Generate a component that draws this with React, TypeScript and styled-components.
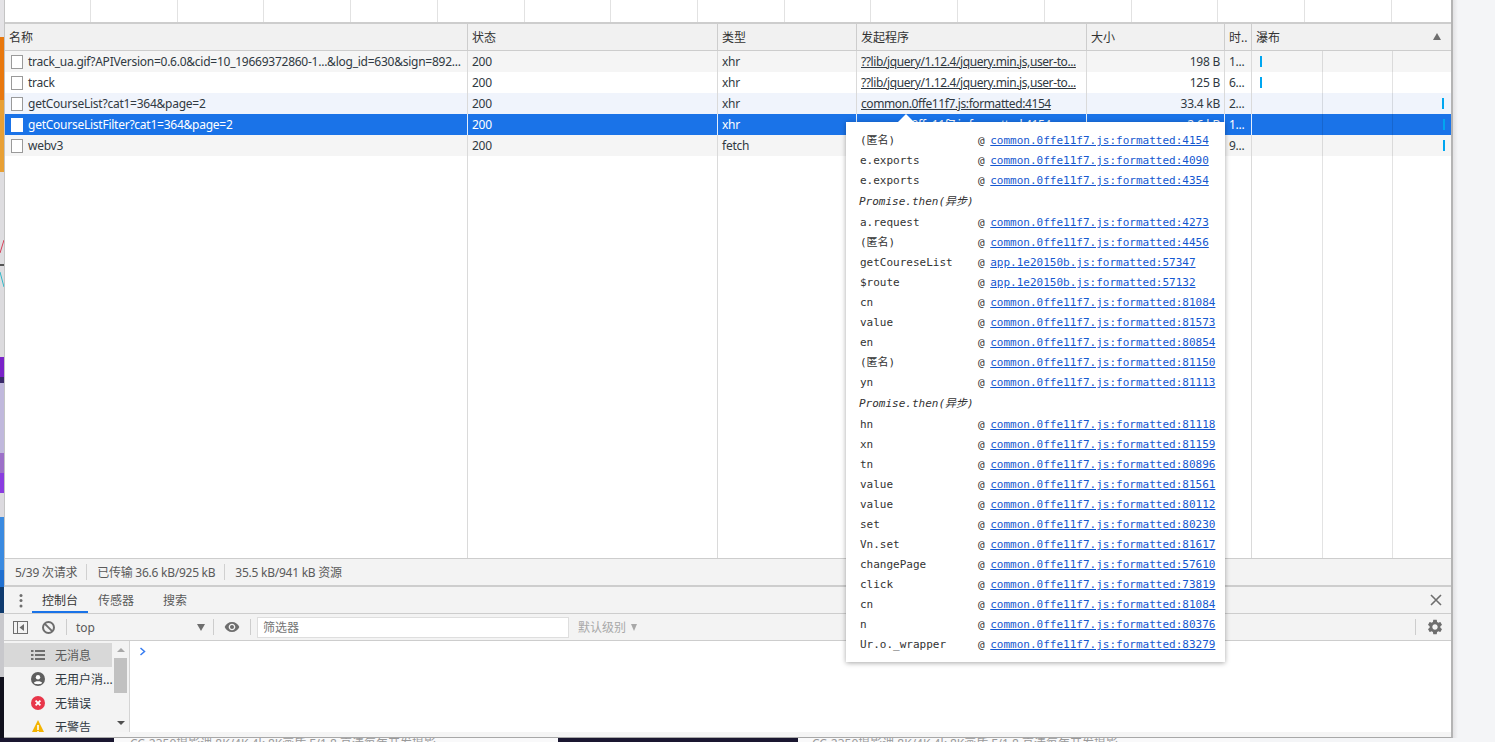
import React from "react";
import styled, { createGlobalStyle } from "styled-components";

const Global = createGlobalStyle`
  html, body { margin: 0; padding: 0; background: #f4f5f7; }
  * { box-sizing: border-box; }
`;

const UI = `"Noto Sans", "Noto Sans CJK SC", sans-serif`;
const MONO = `"DejaVu Sans Mono", "Noto Sans CJK SC", monospace`;
const COLS = "463px 250px 139px 230px 138px 27px 199px";

const Page = styled.div`
  width: 1495px;
  height: 742px;
  overflow: hidden;
  display: flex;
  flex-direction: column;
  font-family: ${UI};
  font-size: 12px;
  color: #303942;
`;
const Main = styled.div`
  display: flex;
  height: 738px;
`;
const Strip = styled.div`
  width: 4px;
  display: flex;
  flex-direction: column;
  flex: none;
`;
const StripPart = styled.div<{ $h: number; $c: string }>`
  height: ${(p) => p.$h}px;
  background: ${(p) => p.$c};
  flex: none;
`;
const StripChart = styled.svg`
  display: block;
  width: 4px;
  height: 50px;
  background: #dedde0;
  flex: none;
`;
const DevTools = styled.div`
  width: 1449px;
  flex: none;
  position: relative;
  display: flex;
  flex-direction: column;
  background: #fff;
  border-right: 2px solid #b4b4b4;
  border-bottom: 1px solid #a8a8a8;
`;
const Gutter = styled.div`
  flex: 1;
  background: linear-gradient(to right, #e2e2e4, #f4f5f7 5px);
`;
const Network = styled.div`
  height: 587px;
  flex: none;
  display: flex;
  flex-direction: column;
  border-left: 1px solid #c4c4c4;
`;
const Ruler = styled.div`
  height: 24px;
  flex: none;
  display: flex;
  border-bottom: 2px solid #cdcdcd;
  overflow: hidden;
`;
const Tick = styled.div`
  width: 86.73px;
  flex: none;
  border-right: 1px solid #e2e2e2;
  &:first-child { width: 86px; }
`;
const Head = styled.div`
  height: 27px;
  flex: none;
  display: grid;
  grid-template-columns: ${COLS};
  background: #f1f1f1;
  border-bottom: 1px solid #cdcdcd;
`;
const HeadCell = styled.div`
  border-right: 1px solid #cdcdcd;
  padding-left: 4px;
  line-height: 28px;
  height: 26px;
  color: #333;
  position: relative;
  &:last-child { border-right: 0; }
`;
const SortArrow = styled.span`
  position: absolute;
  right: 10px;
  top: 9px;
  width: 0;
  height: 0;
  border-left: 4px solid transparent;
  border-right: 4px solid transparent;
  border-bottom: 7px solid #6e6e6e;
`;
const Body = styled.div`
  flex: 1;
  display: flex;
  flex-direction: column;
  min-height: 0;
`;
const Row = styled.div<{ $kind: string }>`
  height: 21px;
  flex: none;
  display: grid;
  grid-template-columns: ${COLS};
  line-height: 22px;
  letter-spacing: -0.25px;
  white-space: nowrap;
  background: ${(p) =>
    p.$kind === "sel" ? "#1a73e8" : p.$kind === "hover" ? "#f0f4fc" : p.$kind === "odd" ? "#f5f5f5" : "#fff"};
  color: ${(p) => (p.$kind === "sel" ? "#fff" : "#303942")};
  --line: ${(p) => (p.$kind === "sel" ? "#e4eefc" : "#dadada")};
`;
const Filler = styled.div`
  flex: 1;
  display: grid;
  grid-template-columns: ${COLS};
  --line: #dadada;
`;
const Cell = styled.div<{ $right?: boolean }>`
  border-right: 1px solid var(--line);
  padding: 0 4px;
  overflow: hidden;
  text-align: ${(p) => (p.$right ? "right" : "left")};
`;
const NameCell = styled(Cell)`
  display: flex;
  align-items: center;
  padding-left: 6px;
  gap: 5px;
`;
const FileIcon = styled.span<{ $sel: boolean }>`
  width: 12px;
  height: 14px;
  flex: none;
  border: 1px solid ${(p) => (p.$sel ? "#fff" : "#9a9a9a")};
  background: #fff;
`;
const InitLink = styled.span`
  text-decoration: underline;
  letter-spacing: -0.4px;
`;
const Fall = styled.div`
  position: relative;
  display: grid;
  grid-template-columns: 71px 70px 1fr;
`;
const FallCol = styled.div`
  border-right: 1px solid rgba(0, 0, 0, 0.11);
  &:last-of-type { border-right: 0; }
`;
const Bar = styled.span<{ $x: number }>`
  position: absolute;
  left: ${(p) => p.$x}px;
  top: 5px;
  width: 2px;
  height: 11px;
  background: #00a6f0;
`;
const StatusBar = styled.div`
  height: 29px;
  flex: none;
  display: flex;
  align-items: center;
  padding-left: 10px;
  background: #f3f3f3;
  color: #5a5a5a;
  letter-spacing: -0.25px;
  border-top: 1px solid #cdcdcd;
  border-bottom: 2px solid #cdcdcd;
`;
const StatusItem = styled.div`
  padding-right: 9px;
  margin-right: 10px;
  height: 16px;
  line-height: 18px;
  border-right: 1px solid #d0d0d0;
  &:last-child { border-right: 0; }
`;
const Tabs = styled.div`
  height: 27px;
  flex: none;
  display: flex;
  background: #f3f3f3;
  border-bottom: 1px solid #cdcdcd;
`;
const Kebab = styled.svg`
  display: block;
  width: 28px;
  height: 26px;
  flex: none;
`;
const Tab = styled.div<{ $active?: boolean; $gap?: number }>`
  padding: 0 10px;
  margin-left: ${(p) => p.$gap ?? 0}px;
  line-height: 27px;
  height: 26px;
  color: ${(p) => (p.$active ? "#333" : "#5a5a5a")};
  border-bottom: 2px solid ${(p) => (p.$active ? "#1a73e8" : "transparent")};
`;
const CloseBtn = styled.svg`
  display: block;
  width: 12px;
  height: 12px;
  margin: 7px 9px 0 auto;
`;
const Toolbar = styled.div`
  height: 27px;
  flex: none;
  display: flex;
  align-items: center;
  padding: 0 7px 0 9px;
  background: #f3f3f3;
  border-bottom: 1px solid #cdcdcd;
`;
const ToolIcon = styled.svg<{ $w: number; $ml: number; $h?: number }>`
  display: block;
  width: ${(p) => p.$w}px;
  height: ${(p) => p.$h ?? p.$w}px;
  margin-left: ${(p) => p.$ml}px;
  flex: none;
`;
const Divider = styled.span<{ $ml: number; $auto?: boolean }>`
  width: 1px;
  height: 16px;
  flex: none;
  background: #cdcdcd;
  margin-left: ${(p) => (p.$auto ? "auto" : `${p.$ml}px`)};
`;
const Context = styled.div`
  width: 129px;
  margin-left: 9px;
  flex: none;
  display: flex;
  align-items: center;
  justify-content: space-between;
  color: #5a5a5a;
`;
const DownArrow = styled.span<{ $w: number; $h: number; $c: string }>`
  width: 0;
  height: 0;
  flex: none;
  border-left: ${(p) => p.$w}px solid transparent;
  border-right: ${(p) => p.$w}px solid transparent;
  border-top: ${(p) => p.$h}px solid ${(p) => p.$c};
`;
const FilterBox = styled.div`
  width: 312px;
  height: 21px;
  margin-left: 6px;
  flex: none;
  padding-left: 5px;
  line-height: 19px;
  background: #fff;
  border: 1px solid #dedede;
  color: #757575;
`;
const Level = styled.div`
  margin-left: 9px;
  display: flex;
  align-items: center;
  gap: 5px;
  color: #a8a8a8;
`;
const Console = styled.div`
  height: 91px;
  flex: none;
  display: flex;
  overflow: hidden;
`;
const Side = styled.div`
  width: 126px;
  flex: none;
  display: flex;
  background: #f3f3f3;
  border-right: 1px solid #d4d4d4;
`;
const SideList = styled.div`
  width: 108px;
  flex: none;
  padding-top: 2px;
`;
const SideItem = styled.div<{ $active?: boolean }>`
  height: 24px;
  flex: none;
  display: flex;
  align-items: center;
  gap: 10px;
  padding-left: 27px;
  white-space: nowrap;
  background: ${(p) => (p.$active ? "#d8d8d8" : "transparent")};
  color: ${(p) => (p.$active ? "#5a5a5a" : "#303942")};
`;
const ItemIcon = styled.svg`
  display: block;
  width: 14px;
  height: 14px;
  flex: none;
`;
const Scroll = styled.div`
  width: 17px;
  flex: none;
  display: flex;
  flex-direction: column;
  align-items: center;
  padding: 7px 0;
`;
const UpArrow = styled.span`
  width: 0;
  height: 0;
  flex: none;
  border-left: 4px solid transparent;
  border-right: 4px solid transparent;
  border-bottom: 4px solid #a8a8a8;
`;
const Thumb = styled.div`
  width: 13px;
  height: 35px;
  margin: 6px 0 auto;
  background: #c1c1c1;
  flex: none;
`;
const Prompt = styled.svg`
  display: block;
  width: 7px;
  height: 9px;
  margin: 6px 0 0 9px;
  flex: none;
`;
const Foot = styled.div`
  flex: 1;
  background: #f5f5f5;
`;
const Popover = styled.div`
  position: absolute;
  left: 842px;
  top: 122px;
  width: 379px;
  padding: 9px 0 7px 14px;
  background: #fff;
  box-shadow: 0 1px 5px rgba(0, 0, 0, 0.35);
  font-family: ${MONO};
  font-size: 11px;
  color: #333;
  white-space: nowrap;
`;
const Tip = styled.span`
  position: absolute;
  left: 52px;
  top: -8px;
  width: 0;
  height: 0;
  border-left: 8px solid transparent;
  border-right: 8px solid transparent;
  border-bottom: 8px solid #fff;
`;
const Frame = styled.div`
  height: 20px;
  line-height: 20px;
  display: grid;
  grid-template-columns: 118px 1fr;
`;
const AsyncFrame = styled.div`
  height: 22px;
  line-height: 22px;
  font-style: italic;
  margin-left: -1px;
`;
const FrameLink = styled.span`
  margin-left: -1px;
  color: #1558d0;
  text-decoration: underline;
`;
const Bottom = styled.div`
  height: 4px;
  flex: none;
  display: flex;
  overflow: hidden;
`;
const BottomDark = styled.div<{ $w: number }>`
  width: ${(p) => p.$w}px;
  flex: none;
  background: #1a1730;
`;
const BottomLight = styled.div<{ $w: number; $pad: number }>`
  width: ${(p) => p.$w}px;
  flex: none;
  padding-left: ${(p) => p.$pad}px;
  background: #f9f9fa;
  color: #9a9a9a;
  line-height: 12px;
  white-space: nowrap;
  overflow: hidden;
`;

const LINK = "??lib/jquery/1.12.4/jquery.min.js,user-to...";
const rows = [
  { kind: "odd", name: "track_ua.gif?APIVersion=0.6.0&cid=10_19669372860-1...&log_id=630&sign=892...", type: "xhr", init: LINK, size: "198 B", time: "1...", bar: 8 },
  { kind: "even", name: "track", type: "xhr", init: LINK, size: "125 B", time: "6...", bar: 8 },
  { kind: "hover", name: "getCourseList?cat1=364&page=2", type: "xhr", init: "common.0ffe11f7.js:formatted:4154", size: "33.4 kB", time: "2...", bar: 190 },
  { kind: "sel", name: "getCourseListFilter?cat1=364&page=2", type: "xhr", init: "common.0ffe11f7.js:formatted:4154", size: "2.6 kB", time: "1...", bar: 191 },
  { kind: "odd", name: "webv3", type: "fetch", init: "", size: "", time: "9...", bar: 191 },
];

const C = "common.0ffe11f7.js:formatted:";
const A = "app.1e20150b.js:formatted:";
const frames: [string, string][] = [
  ["(匿名)", C + 4154], ["e.exports", C + 4090], ["e.exports", C + 4354], ["", ""],
  ["a.request", C + 4273], ["(匿名)", C + 4456], ["getCoureseList", A + 57347], ["$route", A + 57132],
  ["cn", C + 81084], ["value", C + 81573], ["en", C + 80854], ["(匿名)", C + 81150], ["yn", C + 81113], ["", ""],
  ["hn", C + 81118], ["xn", C + 81159], ["tn", C + 80896], ["value", C + 81561], ["value", C + 80112],
  ["set", C + 80230], ["Vn.set", C + 81617], ["changePage", C + 57610], ["click", C + 73819],
  ["cn", C + 81084], ["n", C + 80376], ["Ur.o._wrapper", C + 83279],
];

const stripParts: [number, string][] = [
  [37, "#e4e3e6"], [63, "#e8780e"], [72, "#e8a035"], [68, "#dedde0"],
];
const stripParts2: [number, string][] = [
  [67, "#dcdbde"], [20, "#7a22c8"], [6, "#3a2a6a"], [70, "#c0b8dc"], [20, "#9c70c8"], [20, "#8a3ce0"],
  [24, "#dcdadf"], [53, "#3a8ae0"], [17, "#1f6fd0"], [26, "#0e3a6e"], [64, "#c8c8cc"], [61, "#10101c"],
];

const HEAD = ["名称", "状态", "类型", "发起程序", "大小", "时..", "瀑布"];

export default function App() {
  return (
    <Page>
      <Global />
      <Main>
        <Strip>
          {stripParts.map(([h, c], i) => <StripPart key={i} $h={h} $c={c} />)}
          <StripChart viewBox="0 0 4 50">
            <path d="M4 0 L0 13" stroke="#d8405a" strokeWidth="1" fill="none" />
            <path d="M0 32 L4 47" stroke="#30b8c8" strokeWidth="1" fill="none" />
            <rect x="0" y="24" width="4" height="2" fill="#555" />
          </StripChart>
          {stripParts2.map(([h, c], i) => <StripPart key={i} $h={h} $c={c} />)}
        </Strip>
        <DevTools>
          <Network>
            <Ruler>{Array.from({ length: 17 }, (_, i) => <Tick key={i} />)}</Ruler>
            <Head>
              {HEAD.map((h, i) => (
                <HeadCell key={h}>
                  {h}
                  {i === 6 && <SortArrow />}
                </HeadCell>
              ))}
            </Head>
            <Body>
              {rows.map((r) => (
                <Row key={r.name} $kind={r.kind}>
                  <NameCell>
                    <FileIcon $sel={r.kind === "sel"} />
                    {r.name}
                  </NameCell>
                  <Cell>200</Cell>
                  <Cell>{r.type}</Cell>
                  <Cell><InitLink>{r.init}</InitLink></Cell>
                  <Cell $right>{r.size}</Cell>
                  <Cell>{r.time}</Cell>
                  <Fall>
                    <FallCol /><FallCol /><FallCol />
                    <Bar $x={r.bar} />
                  </Fall>
                </Row>
              ))}
              <Filler>
                <Cell /><Cell /><Cell /><Cell /><Cell /><Cell />
                <Fall><FallCol /><FallCol /><FallCol /></Fall>
              </Filler>
            </Body>
            <StatusBar>
              <StatusItem>5/39 次请求</StatusItem>
              <StatusItem>已传输 36.6 kB/925 kB</StatusItem>
              <StatusItem>35.5 kB/941 kB 资源</StatusItem>
            </StatusBar>
          </Network>
          <Tabs>
            <Kebab viewBox="0 0 28 26">
              <circle cx="17" cy="8.5" r="1.5" fill="#6e6e6e" />
              <circle cx="17" cy="13.5" r="1.5" fill="#6e6e6e" />
              <circle cx="17" cy="19" r="1.5" fill="#6e6e6e" />
            </Kebab>
            <Tab $active>控制台</Tab>
            <Tab>传感器</Tab>
            <Tab $gap={9}>搜索</Tab>
            <CloseBtn viewBox="0 0 12 12">
              <path d="M1 1 L11 11 M11 1 L1 11" stroke="#6e6e6e" strokeWidth="1.6" fill="none" />
            </CloseBtn>
          </Tabs>
          <Toolbar>
            <ToolIcon $w={15} $h={13} $ml={0} viewBox="0 0 15 13">
              <rect x="0.5" y="0.5" width="14" height="12" fill="none" stroke="#6e6e6e" />
              <path d="M4.5 0.5 V12.5" stroke="#6e6e6e" />
              <path d="M11 3 V10 L6.5 6.5 Z" fill="#6e6e6e" />
            </ToolIcon>
            <ToolIcon $w={13} $ml={14} viewBox="0 0 13 13">
              <circle cx="6.5" cy="6.5" r="5.5" fill="none" stroke="#6e6e6e" strokeWidth="2" />
              <path d="M2.6 2.6 L10.4 10.4" stroke="#6e6e6e" strokeWidth="2" />
            </ToolIcon>
            <Divider $ml={11} />
            <Context>
              top
              <DownArrow $w={4} $h={7} $c="#6e6e6e" />
            </Context>
            <Divider $ml={8} />
            <ToolIcon $w={16} $ml={10} viewBox="0 0 24 24">
              <path fill="#6e6e6e" d="M12 4.5C7 4.5 2.73 7.61 1 12c1.73 4.39 6 7.5 11 7.5s9.27-3.11 11-7.5c-1.73-4.39-6-7.5-11-7.5zM12 17c-2.76 0-5-2.24-5-5s2.24-5 5-5 5 2.24 5 5-2.24 5-5 5zm0-8c-1.66 0-3 1.34-3 3s1.34 3 3 3 3-1.34 3-3-1.34-3-3-3z" />
            </ToolIcon>
            <Divider $ml={10} />
            <FilterBox>筛选器</FilterBox>
            <Level>
              默认级别
              <DownArrow $w={3.5} $h={7} $c="#a8a8a8" />
            </Level>
            <Divider $ml={0} $auto />
            <ToolIcon $w={18} $ml={10} viewBox="0 0 24 24">
              <path fill="#6e6e6e" d="M19.14 12.94c.04-.3.06-.61.06-.94 0-.32-.02-.64-.07-.94l2.03-1.58c.18-.14.23-.41.12-.61l-1.92-3.32c-.12-.22-.37-.29-.59-.22l-2.39.96c-.5-.38-1.03-.7-1.62-.94l-.36-2.54c-.04-.24-.24-.41-.48-.41h-3.84c-.24 0-.43.17-.47.41l-.36 2.54c-.59.24-1.13.57-1.62.94l-2.39-.96c-.22-.08-.47 0-.59.22L2.74 8.87c-.12.21-.08.47.12.61l2.03 1.58c-.05.3-.09.63-.09.94s.02.64.07.94l-2.03 1.58c-.18.14-.23.41-.12.61l1.92 3.32c.12.22.37.29.59.22l2.39-.96c.5.38 1.03.7 1.62.94l.36 2.54c.05.24.24.41.48.41h3.84c.24 0 .44-.17.47-.41l.36-2.54c.59-.24 1.13-.56 1.62-.94l2.39.96c.22.08.47 0 .59-.22l1.92-3.32c.12-.22.07-.47-.12-.61l-2.01-1.58zM12 15.6c-1.98 0-3.6-1.62-3.6-3.6s1.62-3.6 3.6-3.6 3.6 1.62 3.6 3.6-1.62 3.6-3.6 3.6z" />
            </ToolIcon>
          </Toolbar>
          <Console>
            <Side>
              <SideList>
                <SideItem $active>
                  <ItemIcon viewBox="0 0 14 14">
                    <path d="M4 3 H14 M4 7 H14 M4 11 H14" stroke="#6e6e6e" strokeWidth="2" />
                    <path d="M0 3 H2.5 M0 7 H2.5 M0 11 H2.5" stroke="#6e6e6e" strokeWidth="2" />
                  </ItemIcon>
                  无消息
                </SideItem>
                <SideItem>
                  <ItemIcon viewBox="0 0 14 14">
                    <circle cx="7" cy="7" r="7" fill="#5f5f5f" />
                    <circle cx="7" cy="5.2" r="2.2" fill="#fff" />
                    <path d="M2.8 11 C3.5 8.8 10.5 8.8 11.2 11 C9.5 12.6 4.5 12.6 2.8 11 Z" fill="#fff" />
                  </ItemIcon>
                  无用户消...
                </SideItem>
                <SideItem>
                  <ItemIcon viewBox="0 0 14 14">
                    <circle cx="7" cy="7" r="7" fill="#e8364a" />
                    <path d="M4.6 4.6 L9.4 9.4 M9.4 4.6 L4.6 9.4" stroke="#fff" strokeWidth="1.8" />
                  </ItemIcon>
                  无错误
                </SideItem>
                <SideItem>
                  <ItemIcon viewBox="0 0 14 14">
                    <path d="M7 0 L14 14 H0 Z" fill="#f4b400" />
                    <path d="M7 5 V10" stroke="#fff" strokeWidth="1.6" />
                    <circle cx="7" cy="12" r="1" fill="#fff" />
                  </ItemIcon>
                  无警告
                </SideItem>
              </SideList>
              <Scroll>
                <UpArrow />
                <Thumb />
                <DownArrow $w={4} $h={4} $c="#505050" />
              </Scroll>
            </Side>
            <Prompt viewBox="0 0 7 9">
              <path d="M1.5 1 L5.5 4.5 L1.5 8" stroke="#367cf1" strokeWidth="1.5" fill="none" />
            </Prompt>
          </Console>
          <Foot />
          <Popover>
            <Tip />
            {frames.map(([fn, link], i) =>
              fn ? (
                <Frame key={i}>
                  <span>{fn}</span>
                  <span>@ <FrameLink>{link}</FrameLink></span>
                </Frame>
              ) : (
                <AsyncFrame key={i}>Promise.then(异步)</AsyncFrame>
              )
            )}
          </Popover>
        </DevTools>
        <Gutter />
      </Main>
      <Bottom>
        <BottomDark $w={114} />
        <BottomLight $w={444} $pad={16}>CC-2350摄影课 8K/4K 4k 8K画质 F/1.8 高清每年开发摄影</BottomLight>
        <BottomDark $w={240} />
        <BottomLight $w={452} $pad={14}>CC-2350摄影课 8K/4K 4k 8K画质 F/1.8 高清每年开发摄影</BottomLight>
      </Bottom>
    </Page>
  );
}
